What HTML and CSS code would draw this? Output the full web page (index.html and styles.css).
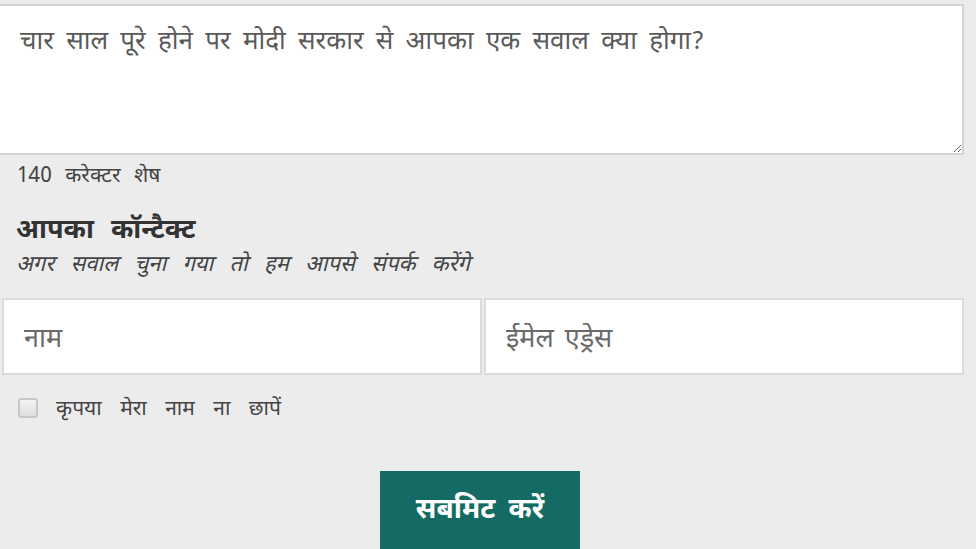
FILE: index.html
```html
<!DOCTYPE html>
<html lang="hi">
<head>
<meta charset="utf-8">
<link rel="stylesheet" href="styles.css">
</head>
<body>
<form class="form">
  <textarea class="question">चार साल पूरे होने पर मोदी सरकार से आपका एक सवाल क्या होगा?</textarea>
  <div class="count">140 करेक्टर शेष</div>
  <div class="contact">
    <div class="contact-title">आपका कॉन्टैक्ट</div>
    <div class="contact-sub">अगर सवाल चुना गया तो हम आपसे संपर्क करेंगे</div>
  </div>
  <div class="fields">
    <input class="field" type="text" placeholder="नाम">
    <input class="field" type="text" placeholder="ईमेल एड्रेस">
  </div>
  <label class="check"><span class="box"></span><span class="check-text">कृपया मेरा नाम ना छापें</span></label>
  <div class="actions"><button type="button" class="submit">सबमिट करें</button></div>
</form>
</body>
</html>
```
FILE: styles.css
```css
html, body {
  margin: 0;
  padding: 0;
  background: #ececec;
  overflow: hidden;
}
body {
  font-family: "Noto Sans Devanagari", "Lohit Devanagari", "Noto Sans", "DejaVu Sans", sans-serif;
  color: #444;
}
.form {
  width: 964px;
  display: flex;
  flex-direction: column;
  padding-top: 4px;
}
.question {
  box-sizing: border-box;
  width: 966px;
  margin-left: -2px;
  height: 151px;
  border: 2px solid #d4d4d4;
  background: #fff;
  padding: 22px 20px;
  font-family: inherit;
  font-size: 26px;
  word-spacing: 5.5px;
  line-height: 30px;
  color: #5a5a5a;
  resize: vertical;
  display: block;
}
.count {
  font-size: 21px;
  word-spacing: 8px;
  line-height: 26px;
  color: #444;
  padding: 9px 0 0 17px;
}
.contact {
  padding: 26px 0 0 16px;
}
.contact-title {
  font-size: 27px;
  font-weight: 700;
  word-spacing: 10px;
  line-height: 32px;
  color: #333;
}
.contact-sub {
  margin-top: 5px;
  font-size: 22px;
  font-style: italic;
  word-spacing: 10.5px;
  line-height: 26px;
  color: #444;
}
.fields {
  display: grid;
  grid-template-columns: 1fr 1fr;
  gap: 2px;
  margin: 19px 0 0 2px;
}
.field {
  box-sizing: border-box;
  height: 77px;
  border: 2px solid #dcdcdc;
  background: #fff;
  padding: 8px 20px 0;
  font-family: inherit;
  font-size: 27px;
  word-spacing: 4px;
  color: #555;
  outline: none;
  min-width: 0;
}
.field::placeholder {
  color: #6a6a6a;
}
.check {
  display: flex;
  align-items: center;
  gap: 18px;
  padding: 17px 0 0 18px;
  font-size: 21px;
  word-spacing: 13px;
  line-height: 26px;
  color: #444;
}
.check-text {
  padding-top: 5px;
}
.box {
  width: 16px;
  height: 16px;
  border: 2px solid #c8c8c8;
  border-radius: 3px;
  background: linear-gradient(#f4f4f4, #dedede);
}
.actions {
  display: flex;
  justify-content: center;
  padding-top: 48px;
  margin-left: -4px;
}
.submit {
  width: 200px;
  height: 90px;
  background: #146b63;
  border: 0;
  color: #fff;
  font-family: inherit;
  font-size: 28px;
  font-weight: 700;
  word-spacing: 6px;
  padding: 0 0 10px;
}
```
